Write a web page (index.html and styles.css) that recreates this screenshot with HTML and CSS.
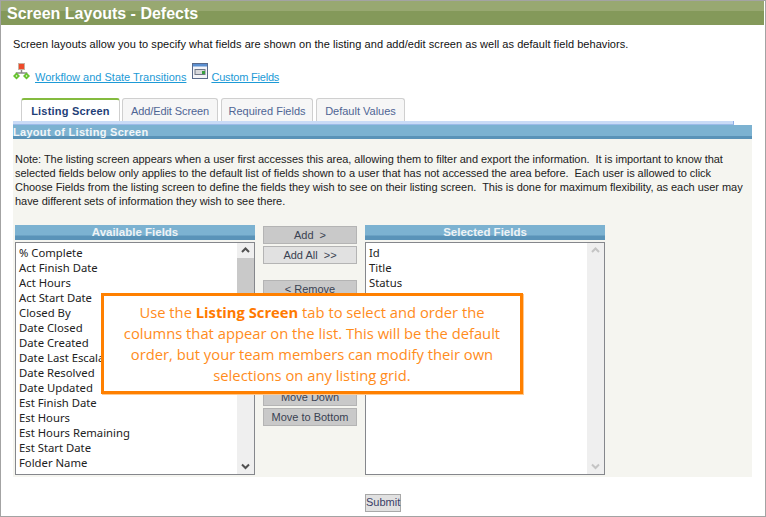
FILE: index.html
```html
<!DOCTYPE html>
<html lang="en">
<head>
    <meta charset="UTF-8">
    <title>Screen Layouts - Defects</title>
    <link rel="stylesheet" href="styles.css">
</head>
<body>
    <div class="frame">
        <h1 class="page-title">Screen Layouts - Defects</h1>
        <div class="content">
            <p class="intro">Screen layouts allow you to specify what fields are shown on the listing and add/edit screen as well as default field behaviors.</p>

            <div class="links">
                <svg class="icon" width="17" height="18" viewBox="0 0 17 18">
                    <path d="M8.5 7v3M3.5 13v-3h10v3" fill="none" stroke="#8a8a8a" stroke-width="1.5"/>
                    <rect x="5.5" y="0.5" width="6" height="6" fill="#ee4a2a" stroke="#c8b0a0"/>
                    <path d="M3.5 9.5l3.500 3.500-3.500 3.500-3.500-3.500z" fill="#66c22e"/>
                    <path d="M13.500 9.500l3.500 3.500-3.500 3.500-3.500-3.500z" fill="#66c22e"/>
                    <path d="M3.500 12l1 1-1 1-1-1zM13.500 12l1 1-1 1-1-1z" fill="#e8f8d8"/>
                </svg>
                <a href="#" class="link">Workflow and State Transitions</a>
                <svg class="icon icon-window" width="16" height="17" viewBox="0 0 16 17">
                    <rect x="0.500" y="0.500" width="15" height="15" fill="#f4f4f8" stroke="#5a6a8a"/>
                    <rect x="1" y="1" width="14" height="2.500" fill="#5b8fd0"/>
                    <rect x="3" y="6.500" width="10" height="5" fill="#d8d8dc" stroke="#707888"/>
                    <rect x="10" y="8" width="3" height="3" fill="#3aa040"/>
                </svg>
                <a href="#" class="link link-custom">Custom Fields</a>
            </div>

            <div class="tabs">
                <div class="tab active">Listing Screen</div>
                <div class="tab tab-add">Add/Edit Screen</div>
                <div class="tab tab-req">Required Fields</div>
                <div class="tab tab-def">Default Values</div>
            </div>
            <div class="tab-line"></div>
            <div class="section-bar">Layout of Listing Screen</div>

            <div class="panel">
                <p class="note">Note: The listing screen appears when a user first accesses this area, allowing them to filter and export the information.&nbsp; It is important to know that selected fields below only applies to the default list of fields shown to a user that has not accessed the area before.&nbsp; Each user is allowed to click Choose Fields from the listing screen to define the fields they wish to see on their listing screen.&nbsp; This is done for maximum flexibility, as each user may have different sets of information they wish to see there.</p>

                <div class="pickers">
                    <div class="picker">
                        <div class="picker-head">Available Fields</div>
                        <div class="listbox">
                            <div class="options">
                                <div>% Complete</div>
                                <div>Act Finish Date</div>
                                <div>Act Hours</div>
                                <div>Act Start Date</div>
                                <div>Closed By</div>
                                <div>Date Closed</div>
                                <div>Date Created</div>
                                <div>Date Last Escalated</div>
                                <div>Date Resolved</div>
                                <div>Date Updated</div>
                                <div>Est Finish Date</div>
                                <div>Est Hours</div>
                                <div>Est Hours Remaining</div>
                                <div>Est Start Date</div>
                                <div>Folder Name</div>
                                <div>Functional Area</div>
                            </div>
                            <div class="scrollbar">
                                <svg class="arrow" width="17" height="15" viewBox="0 0 17 15"><path d="M5 9l3.500-3.500 3.500 3.500" fill="none" stroke="#505050" stroke-width="2"/></svg>
                                <div class="thumb"></div>
                                <svg class="arrow arrow-down" width="17" height="15" viewBox="0 0 17 15"><path d="M5 5.500l3.500 3.500 3.500-3.500" fill="none" stroke="#505050" stroke-width="2"/></svg>
                            </div>
                        </div>
                    </div>

                    <div class="actions">
                        <button class="btn">Add &nbsp;&gt;</button>
                        <button class="btn btn-light">Add All &nbsp;&gt;&gt;</button>
                        <button class="btn btn-gap">&lt; Remove</button>
                        <button class="btn btn-light">&lt;&lt; Remove All</button>
                        <button class="btn btn-gap-lg">Move to Top</button>
                        <button class="btn">Move Up</button>
                        <button class="btn">Move Down</button>
                        <button class="btn">Move to Bottom</button>
                    </div>

                    <div class="picker">
                        <div class="picker-head">Selected Fields</div>
                        <div class="listbox">
                            <div class="options">
                                <div>Id</div>
                                <div>Title</div>
                                <div>Status</div>
                            </div>
                            <div class="scrollbar">
                                <svg class="arrow" width="17" height="15" viewBox="0 0 17 15"><path d="M5 9l3.500-3.500 3.500 3.500" fill="none" stroke="#c4c4c4" stroke-width="2"/></svg>
                                <svg class="arrow arrow-down" width="17" height="15" viewBox="0 0 17 15"><path d="M5 5.500l3.500 3.500 3.500-3.500" fill="none" stroke="#c4c4c4" stroke-width="2"/></svg>
                            </div>
                        </div>
                    </div>
                </div>
            </div>

            <div class="submit-row">
                <button class="submit">Submit</button>
            </div>
        </div>

        <div class="callout">Use the <b>Listing Screen</b> tab to select and order the columns that appear on the list. This will be the default order, but your team members can modify their own selections on any listing grid.</div>
    </div>
</body>
</html>
```

FILE: styles.css
```css
* {
    box-sizing: border-box;
}

body {
    margin: 0;
    background: #fff;
    font-family: "Liberation Sans", Arial, sans-serif;
    overflow: hidden;
}

.frame {
    position: relative;
    width: 766px;
    height: 517px;
    border: 1px solid #a3a3a3;
    overflow: hidden;
}

.page-title {
    margin: 0;
    height: 24px;
    padding-left: 6px;
    width: 763px;
    background: linear-gradient(#98a871 0, #98a871 10px, #84995a 10px, #84995a 100%);
    color: #fff;
    font-size: 16px;
    line-height: 25px;
    font-weight: bold;
}

.content {
    padding-left: 12px;
}

.intro {
    margin: 0;
    padding-top: 12px;
    font-size: 11px;
    line-height: 15px;
    color: #111;
    letter-spacing: 0.05px;
}

/* Links row */
.links {
    display: flex;
    align-items: flex-start;
    height: 20px;
    margin-top: 11px;
    font-size: 11px;
}

.icon {
    flex: none;
}

.icon-window {
    margin-left: 6px;
}

.link {
    margin: 7px 0 0 5px;
    line-height: 14px;
    color: #1c9ad6;
}

.link-custom {
    margin-left: 3px;
    letter-spacing: -0.2px;
}

/* Tabs */
.tabs {
    display: flex;
    gap: 3px;
    height: 23px;
    margin: 15px 0 0 8px;
}

.tab {
    width: 96px;
    height: 23px;
    border: 1px solid #cfcfcf;
    border-bottom: 0;
    border-radius: 3px 3px 0 0;
    background: #f6f6f6;
    color: #4f6594;
    font-size: 11px;
    line-height: 24px;
    text-align: center;
}

.tab.active {
    width: 99px;
    margin-right: -1px;
    border-top: 2px solid #84bb3f;
    background: #fff;
    color: #1f3f78;
    font-weight: bold;
    line-height: 22px;
    letter-spacing: 0.2px;
}

.tab-add {
    letter-spacing: -0.1px;
}

.tab-req {
    width: 92px;
}

.tab-def {
    width: 89px;
}

.tab-line {
    width: 721px;
    height: 4px;
    background: #c9dbf6;
    border-bottom: 1px solid #9cbbe8;
    border-right: 1px solid #8eaee6;
}

.section-bar {
    width: 739px;
    height: 14px;
    background: linear-gradient(#7cb2d1 0, #7cb2d1 11px, #5a93b8 11px);
    color: #f2f6f8;
    font-size: 11px;
    font-weight: bold;
    line-height: 14px;
    letter-spacing: 0.3px;
}

/* Main panel */
.panel {
    width: 739px;
    height: 338px;
    padding: 13px 2px 0;
    background: #f5f5f0;
}

.note {
    margin: 0;
    width: 735px;
    font-size: 11px;
    line-height: 14px;
    letter-spacing: -0.04px;
    color: #222;
}

.pickers {
    display: flex;
    gap: 8px;
    margin-top: 17px;
}

.picker {
    width: 240px;
}

.picker-head {
    height: 15px;
    background: linear-gradient(#7cb2d1 0, #7cb2d1 10px, #5a93b8 11px);
    color: #eef3f6;
    font-size: 11.5px;
    font-weight: bold;
    line-height: 14px;
    text-align: center;
}

.listbox {
    display: flex;
    height: 233px;
    margin-top: 2px;
    background: #fff;
    border: 1px solid #85878c;
    overflow: hidden;
}

.options {
    flex: 1;
    padding: 2px 0 0 3px;
    font-family: "Noto Sans", sans-serif;
    font-size: 11.3px;
    line-height: 15px;
    color: #222;
    overflow: hidden;
    white-space: nowrap;
}

.scrollbar {
    display: flex;
    flex-direction: column;
    width: 17px;
    flex: none;
    background: #efefef;
}

.arrow {
    flex: none;
    display: block;
}

.arrow-down {
    margin-top: auto;
}

.thumb {
    height: 80px;
    background: #c9c9c9;
}

/* Middle buttons */
.actions {
    display: flex;
    flex-direction: column;
    gap: 2px;
    width: 94px;
    padding-top: 1px;
}

.btn {
    height: 18px;
    padding: 0;
    border: 1px solid #b4b4b4;
    background: #c9c9c9;
    color: #3a4252;
    font-family: "Liberation Sans", Arial, sans-serif;
    font-size: 11px;
    line-height: 15px;
}

.btn-light {
    background: #e1e1e1;
}

.btn-gap {
    margin-top: 14px;
}

.btn-gap-lg {
    margin-top: 28px;
}

.submit-row {
    width: 740px;
    margin-top: 15px;
    text-align: center;
}

.submit {
    width: 36px;
    height: 18px;
    padding: 0;
    border: 1px solid #a8a8a8;
    background: #e1e1e1;
    color: #3a3f68;
    font-family: "Liberation Sans", Arial, sans-serif;
    font-size: 11px;
    line-height: 15px;
}

/* Orange annotation over the page */
.callout {
    position: absolute;
    left: 100px;
    top: 292px;
    width: 422px;
    height: 101px;
    padding: 6px 18px 0;
    background: #fff;
    border: 3px solid #ff8000;
    box-shadow: 1px 1px 0 #ffc98f;
    color: #ff8c1c;
    font-family: "Open Sans", sans-serif;
    font-size: 14.75px;
    line-height: 21px;
    text-align: center;
}

.callout b {
    color: #ff7a00;
}
```
